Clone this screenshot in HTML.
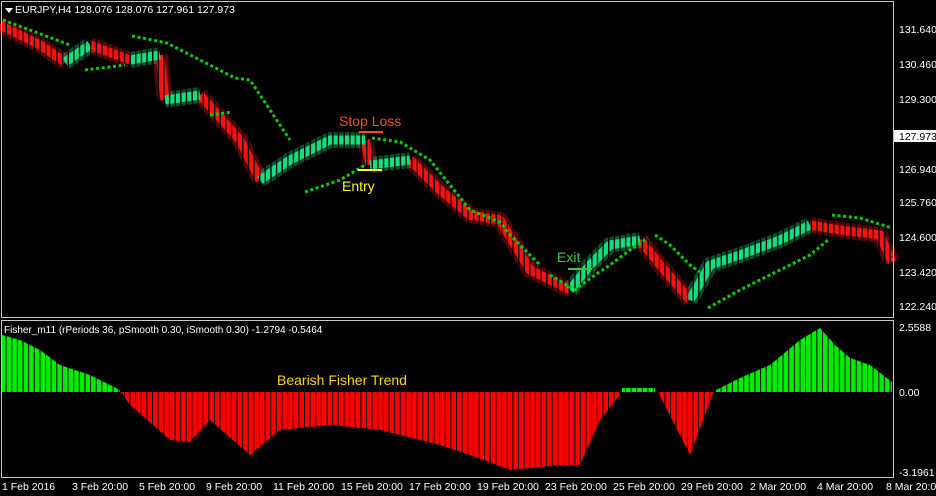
<!DOCTYPE html><html><head><meta charset="utf-8"><style>
body{margin:0;background:#000;width:936px;height:496px;overflow:hidden;font-family:"Liberation Sans",sans-serif}
svg{position:absolute;left:0;top:0}
</style></head><body>
<svg width="936" height="496" xmlns="http://www.w3.org/2000/svg" font-family="Liberation Sans, sans-serif" font-size="11">
<defs>
<pattern id="st" patternUnits="userSpaceOnUse" width="5.63" height="10"><rect x="0" y="0" width="1.4" height="10" fill="#000"/></pattern>
<pattern id="st2" patternUnits="userSpaceOnUse" width="5.63" height="10"><rect x="0" y="0" width="1" height="10" fill="#000"/></pattern>
</defs>
<rect width="936" height="496" fill="#000"/>
<!-- candles -->
<g fill="none" stroke-linejoin="round">
<path stroke="#ff1010" stroke-width="16" opacity="0.35" d="M0,25 L40,45 L65,62 M90,45 L130,60 M160,55 L165,100 M200,95 L240,140 L260,180 M365,140 L370,165 M410,160 L440,190 L470,215 L500,220 L530,270 L570,290 M640,240 L660,265 L690,300 M810,225 L840,230 L880,235 L892,262"/>
<path stroke="#10e080" stroke-width="16" opacity="0.35" d="M65,62 L90,45 M130,60 L160,55 M165,100 L200,95 M260,180 L290,160 L330,140 L365,140 M370,165 L410,160 M570,290 L590,265 L610,245 L640,240 M690,300 L710,265 L740,255 L780,240 L810,225"/>
<path stroke="#ff1010" stroke-width="9" d="M0,25 L40,45 L65,62 M90,45 L130,60 M160,55 L165,100 M200,95 L240,140 L260,180 M365,140 L370,165 M410,160 L440,190 L470,215 L500,220 L530,270 L570,290 M640,240 L660,265 L690,300 M810,225 L840,230 L880,235 L892,262"/>
<path stroke="#10e080" stroke-width="9" d="M65,62 L90,45 M130,60 L160,55 M165,100 L200,95 M260,180 L290,160 L330,140 L365,140 M370,165 L410,160 M570,290 L590,265 L610,245 L640,240 M690,300 L710,265 L740,255 L780,240 L810,225"/>
</g>
<rect x="2" y="2" width="891" height="315" fill="url(#st)"/>
<!-- PSAR dots -->
<g fill="none" stroke="#00d000" stroke-width="3" stroke-dasharray="3 2.63">
<polyline points="3,20 70,45"/>
<polyline points="85,70 125,65"/>
<polyline points="132,36 167,43 200,60 235,78 250,80 290,140"/>
<polyline points="210,115 232,112"/>
<polyline points="305,192 340,180 365,165"/>
<polyline points="372,138 400,142 430,160 450,185 470,210 500,222 510,235 540,265"/>
<polyline points="550,275 575,290 595,275 610,265 630,250 648,238"/>
<polyline points="655,235 670,245 690,265 700,272"/>
<polyline points="708,308 740,290 780,270 810,255 828,240"/>
<polyline points="832,215 860,218 892,228"/>
</g>
<!-- histogram -->
<path fill="#00ee00" d="M2,392 L2,335 L20,340 L40,350 L60,365 L90,375 L120,390 L120,392 Z M622,392 L622,388 L655,388 L655,392 Z M716,392 L716,390 L740,378 L770,365 L800,340 L820,328 L835,345 L850,358 L870,365 L892,382 L892,392 Z"/>
<path fill="#ff0000" d="M121,392 L130,405 L170,440 L190,442 L210,420 L250,455 L280,430 L330,425 L380,430 L440,445 L470,455 L510,470 L560,465 L580,465 L600,420 L620,395 L620,392 Z M658,392 L690,455 L713,394 L713,392 Z"/>
<rect x="2" y="322" width="891" height="155" fill="url(#st2)"/>
<rect x="1.5" y="1.5" width="892" height="316" fill="none" stroke="#c8c8c8"/>
<rect x="1.5" y="320.5" width="892" height="157" fill="none" stroke="#c8c8c8"/>
<polygon points="5,8 13,8 9,13" fill="#fff"/>
<text x="15" y="13" fill="#fff" font-size="10.5">EURJPY,H4  128.076 128.076 127.961 127.973</text>
<text x="4" y="333" fill="#fff" font-size="10">Fisher_m11  (rPeriods 36, pSmooth 0.30, iSmooth 0.30)   -1.2794  -0.5464</text>
<g fill="#fff" font-size="10.5">
<text x="899" y="33">131.640</text><text x="899" y="68">130.460</text><text x="899" y="103">129.300</text>
<text x="899" y="173">126.940</text><text x="899" y="206">125.760</text><text x="899" y="241">124.600</text>
<text x="899" y="276">123.420</text><text x="899" y="310">122.240</text>
<text x="899" y="331">2.5588</text><text x="899" y="396">0.00</text><text x="899" y="476">-3.1961</text>
</g>
<rect x="894" y="130" width="42" height="12" fill="#fff"/><text x="899" y="140" fill="#000" font-size="10.5">127.973</text>
<g fill="#fff" font-size="10.5">
<text x="2" y="490">1 Feb 2016</text><text x="72" y="490">3 Feb 20:00</text><text x="139" y="490">5 Feb 20:00</text>
<text x="206" y="490">9 Feb 20:00</text><text x="273" y="490">11 Feb 20:00</text><text x="341" y="490">15 Feb 20:00</text>
<text x="409" y="490">17 Feb 20:00</text><text x="477" y="490">19 Feb 20:00</text><text x="545" y="490">23 Feb 20:00</text>
<text x="613" y="490">25 Feb 20:00</text><text x="681" y="490">29 Feb 20:00</text><text x="750" y="490">2 Mar 20:00</text>
<text x="817" y="490">4 Mar 20:00</text><text x="886" y="490">8 Mar 20:00</text>
</g>
<text x="339" y="126" fill="#ff4a1a" font-size="14">Stop Loss</text>
<rect x="359" y="131" width="24" height="2" fill="#ff4a1a"/>
<text x="342" y="191" fill="#ffff00" font-size="14">Entry</text>
<rect x="358" y="169" width="24" height="2" fill="#ffff00"/>
<text x="557" y="262" fill="#3cc83c" font-size="14">Exit</text>
<rect x="568" y="268" width="24" height="2" fill="#3cc83c"/>
<text x="277" y="385" fill="#ffd700" font-size="14">Bearish Fisher Trend</text>
</svg>
</body></html>
